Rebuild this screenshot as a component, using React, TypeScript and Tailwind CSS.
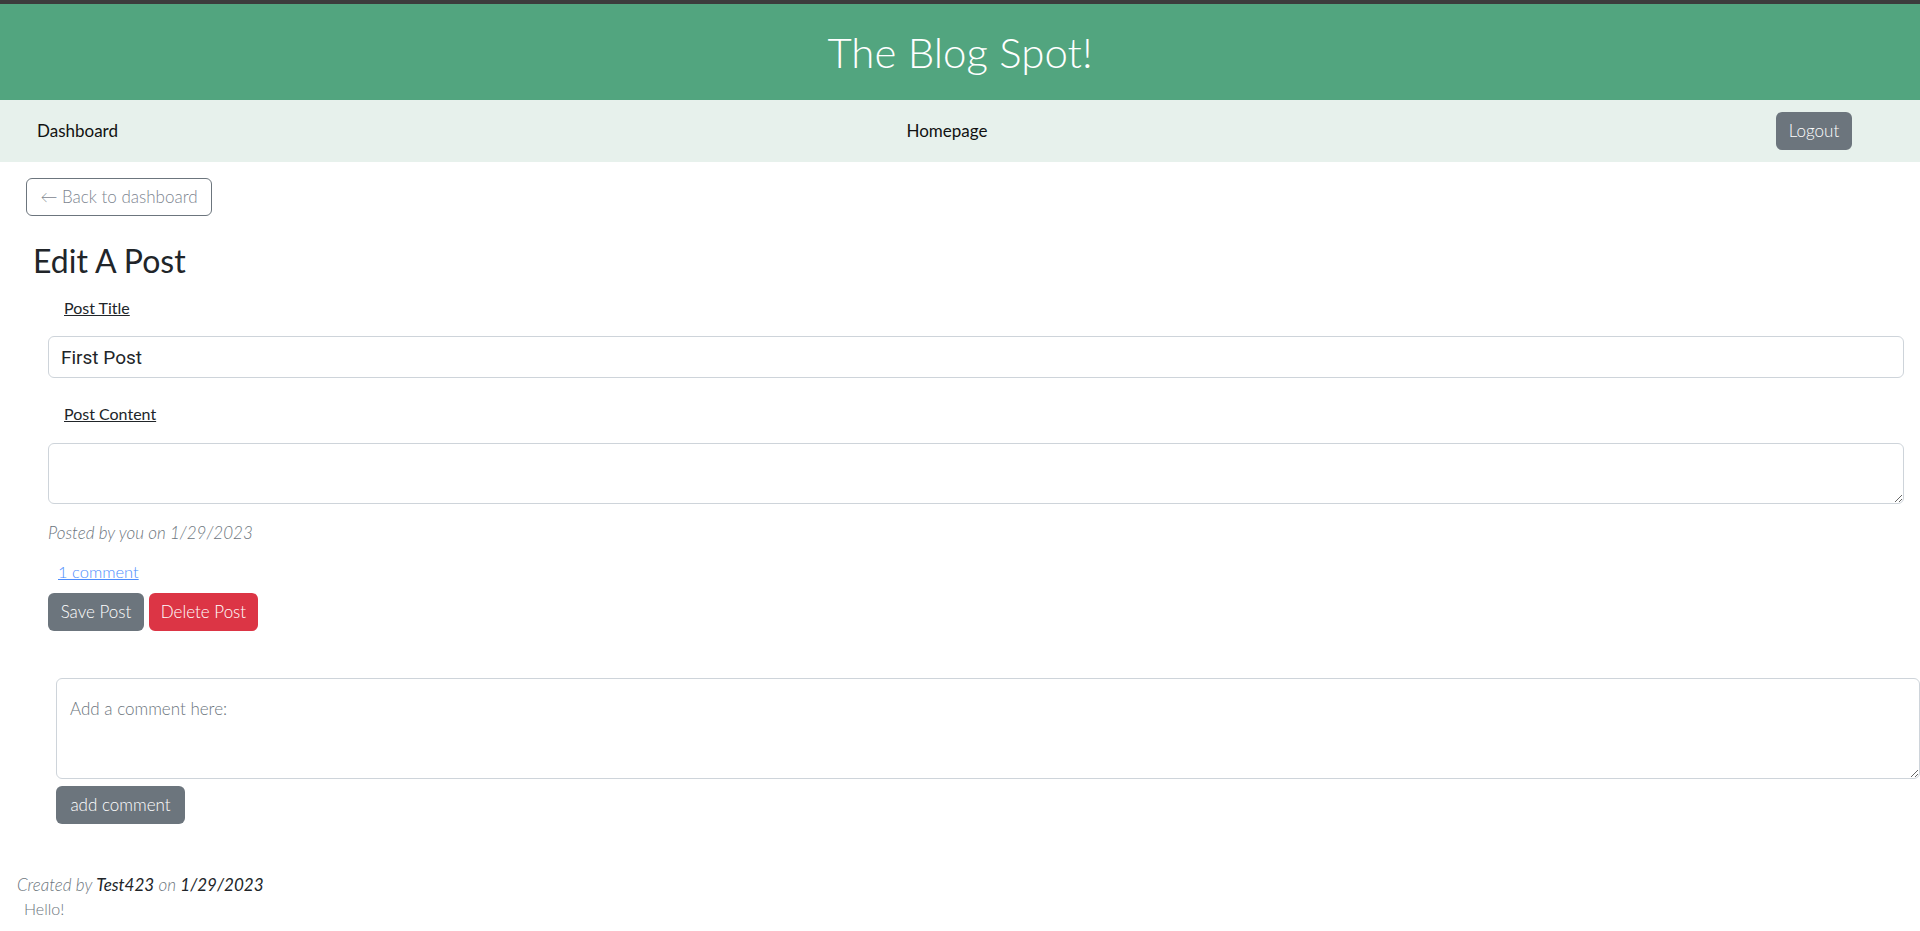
import React from "react";

const qs = { fontFamily: "Lato, 'Open Sans', sans-serif" };

function Btn({ children, className }: { children: React.ReactNode; className: string }) {
  return (
    <button
      type="button"
      className={"h-[38px] whitespace-nowrap rounded-[6px] text-[17px] font-light text-white " + className}
    >
      {children}
    </button>
  );
}

export default function App() {
  return (
    <div className="min-h-[931px] bg-white text-[#212529]" style={qs}>
      <div className="h-[4px] bg-[#3c3c3c]" />
      <header className="flex h-[96px] items-center justify-center bg-[#52a57f]">
        <h1 className="text-[42px] font-light leading-none text-white">The Blog Spot!</h1>
      </header>

      <nav className="flex h-[62px] items-center justify-between bg-[#e7f1ec] pl-[37px] pr-[68px] text-[17px] text-[#111]">
        <a href="#">Dashboard</a>
        <a href="#">Homepage</a>
        <Btn className="w-[76px] bg-[#6c757d]">Logout</Btn>
      </nav>

      <main>
        <div className="pl-[26px] pt-[16px]">
          <button
            type="button"
            className="h-[38px] w-[186px] rounded-[6px] border border-[#6c757d] text-[17px] font-light text-[#7d8590]"
          >
            ← Back to dashboard
          </button>
        </div>

        <h2 className="mt-[26px] pl-[33px] text-[32px] font-normal leading-[38px]">Edit A Post</h2>

        <form className="pl-[48px] pr-[16px]">
          <label className="mt-[16px] block pl-[16px] text-[16px] leading-[24px] underline">Post Title</label>
          <input
            defaultValue="First Post"
            className="mt-[16px] block h-[42px] w-full rounded-[6px] border border-[#ced4da] px-[12px] text-[19px] text-[#212529]"
            style={{ fontFamily: "Roboto, 'Open Sans', sans-serif" }}
          />
          <label className="mt-[24px] block pl-[16px] text-[16px] leading-[24px] underline">Post Content</label>
          <textarea className="mt-[17px] block h-[61px] w-full rounded-[6px] border border-[#ced4da] px-3 py-2" />

          <p className="mt-[17px] text-[17px] font-light italic leading-[24px] text-[#6c757d]">
            Posted by you on 1/29/2023
          </p>
          <a
            href="#"
            className="mt-[15px] ml-[10px] inline-block text-[16.5px] font-light leading-[24px] text-[#4d8dfd] underline"
          >
            1 comment
          </a>
          <div className="mt-[9px] flex gap-[5px]">
            <Btn className="w-[96px] bg-[#6c757d]">Save Post</Btn>
            <Btn className="w-[109px] bg-[#dc3545]">Delete Post</Btn>
          </div>
        </form>

        <div className="mt-[47px] pl-[56px]">
          <textarea
            placeholder="Add a comment here:"
            className="block h-[101px] w-full rounded-[6px] border border-[#ced4da] px-[13px] py-[18px] text-[17px] font-light leading-[24px] placeholder:text-[#6c757d]"
          />
          <Btn className="mt-[7px] w-[129px] bg-[#6c757d]">add comment</Btn>
        </div>

        <div className="mt-[49px] pl-[17px] text-[17px] leading-[24px]">
          <p className="font-light italic text-[#6c757d]">
            Created by <span className="font-normal text-[#212529]">Test423</span> on{" "}
            <span className="font-normal text-[#212529]">1/29/2023</span>
          </p>
          <p className="pl-[7px] text-[16px] font-light text-[#6c757d]">Hello!</p>
        </div>
      </main>
    </div>
  );
}
